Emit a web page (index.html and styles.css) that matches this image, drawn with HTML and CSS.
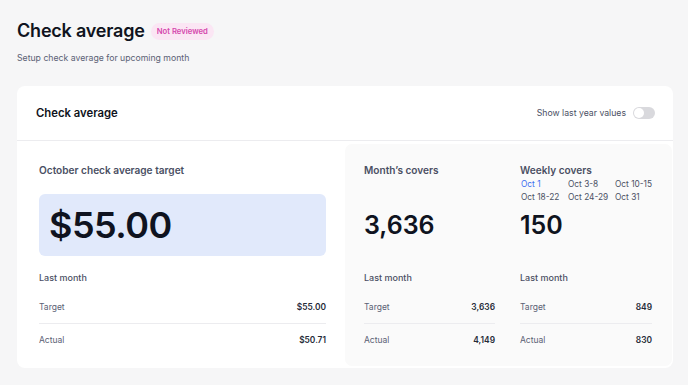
FILE: index.html
```html
<!DOCTYPE html>
<html lang="en">
<head>
    <meta charset="UTF-8">
    <meta name="viewport" content="width=device-width, initial-scale=1.0">
    <title>Check average</title>
    <link rel="stylesheet" href="styles.css">
</head>
<body>
    <div class="page-head">
        <div class="title-row">
            <h1>Check average</h1>
            <span class="badge">Not Reviewed</span>
        </div>
        <p class="subtitle">Setup check average for upcoming month</p>
    </div>

    <div class="card">
        <div class="card-header">
            <h2>Check average</h2>
            <label class="toggle-label">
                Show last year values
                <span class="toggle"><span class="knob"></span></span>
            </label>
        </div>
        <div class="card-body">
            <div class="target-col">
                <div class="col-head">
                    <div class="block-title">October check average target</div>
                </div>
                <div class="target-box">$55.00</div>
                <div class="last-month">
                    <div class="lm-title">Last month</div>
                    <div class="lm-row"><span>Target</span><b>$55.00</b></div>
                    <div class="lm-row"><span>Actual</span><b>$50.71</b></div>
                </div>
            </div>
            <div class="covers-panel">
                <div class="covers-col">
                    <div class="col-head">
                        <div class="block-title">Month’s covers</div>
                    </div>
                    <div class="big-num">3,636</div>
                    <div class="last-month">
                        <div class="lm-title">Last month</div>
                        <div class="lm-row"><span>Target</span><b>3,636</b></div>
                        <div class="lm-row"><span>Actual</span><b>4,149</b></div>
                    </div>
                </div>
                <div class="covers-col">
                    <div class="col-head">
                        <div class="block-title">Weekly covers</div>
                        <div class="weeks">
                            <span class="active">Oct 1</span>
                            <span>Oct 3-8</span>
                            <span>Oct 10-15</span>
                            <span>Oct 18-22</span>
                            <span>Oct 24-29</span>
                            <span>Oct 31</span>
                        </div>
                    </div>
                    <div class="big-num">150</div>
                    <div class="last-month">
                        <div class="lm-title">Last month</div>
                        <div class="lm-row"><span>Target</span><b>849</b></div>
                        <div class="lm-row"><span>Actual</span><b>830</b></div>
                    </div>
                </div>
            </div>
        </div>
    </div>
</body>
</html>
```

FILE: styles.css
```css
:root {
    --text-dark: #0f1320;
    --text-muted: #5b6175;
    --text-label: #4a4f63;
    --border-color: #ececef;
    --page-bg: #f6f6f7;
    --accent: #3c6cf0;
}
body {
    font-family: Inter, "Liberation Sans", sans-serif;
    background-color: var(--page-bg);
    margin: 0;
    padding: 19px 15px 17px 17px;
    color: var(--text-dark);
}
.title-row {
    display: flex;
    align-items: center;
    gap: 6px;
}
h1 {
    margin: 0;
    font-size: 18px;
    font-weight: 600;
    letter-spacing: -0.2px;
    line-height: 24px;
}
.badge {
    background-color: #fbe6f4;
    color: #d548ad;
    font-size: 7.7px;
    font-weight: 600;
    padding: 4px 6px;
    border-radius: 10px;
    margin-top: 1px;
}
.subtitle {
    margin: 9px 0 0;
    font-size: 8.7px;
    line-height: 12px;
    color: var(--text-muted);
}
.card {
    margin-top: 22px;
    background-color: #fff;
    border-radius: 8px;
    overflow: hidden;
}
.card-header {
    display: flex;
    justify-content: space-between;
    align-items: center;
    height: 54px;
    padding: 0 18px 0 19px;
    border-bottom: 1px solid var(--border-color);
}
h2 {
    margin: 0;
    font-size: 11.3px;
    font-weight: 600;
}
.toggle-label {
    display: flex;
    align-items: center;
    gap: 7px;
    font-size: 8.7px;
    color: var(--text-label);
}
.toggle {
    width: 22px;
    height: 12px;
    border-radius: 6px;
    background-color: #d9d9dd;
    display: flex;
    align-items: center;
    padding: 0 1px;
    box-sizing: border-box;
}
.knob {
    width: 10px;
    height: 10px;
    border-radius: 50%;
    background-color: #fff;
}
.card-body {
    display: grid;
    grid-template-columns: 328px 1fr;
    padding: 3px 1px 2px 0;
}
.target-col {
    padding: 19px 19px 10px 22px;
}
.col-head {
    height: 31px;
}
.block-title {
    font-size: 10.1px;
    font-weight: 600;
    color: var(--text-label);
    line-height: 14px;
}
.target-box {
    height: 62px;
    background-color: #e1e9fb;
    border-radius: 6px;
    display: flex;
    align-items: center;
    padding-left: 10px;
    font-size: 36px;
    font-weight: 600;
    letter-spacing: -0.5px;
}
.last-month {
    margin-top: 15px;
}
.lm-title {
    font-size: 9px;
    font-weight: 500;
    color: var(--text-label);
    line-height: 14px;
}
.lm-row {
    display: flex;
    justify-content: space-between;
    align-items: center;
    height: 32px;
    font-size: 8.5px;
}
.lm-row:nth-child(2) {
    margin-top: 6px;
    border-bottom: 1px solid var(--border-color);
}
.lm-row span {
    color: var(--text-muted);
}
.lm-row b {
    font-size: 8.4px;
    font-weight: 600;
    color: #252a37;
}
.covers-panel {
    background-color: #fafafa;
    border-radius: 7px;
    display: grid;
    grid-template-columns: 131px 132px;
    column-gap: 25px;
    padding: 19px 20px 10px 19px;
}
.big-num {
    height: 62px;
    display: flex;
    align-items: center;
    font-size: 25px;
    font-weight: 600;
}
.weeks {
    display: grid;
    grid-template-columns: 47px 47px 1fr;
    row-gap: 1px;
    margin-top: 1px;
    font-size: 8.3px;
    color: var(--text-label);
    line-height: 12px;
    white-space: nowrap;
    padding-left: 1px;
}
.weeks .active {
    color: var(--accent);
}
```
